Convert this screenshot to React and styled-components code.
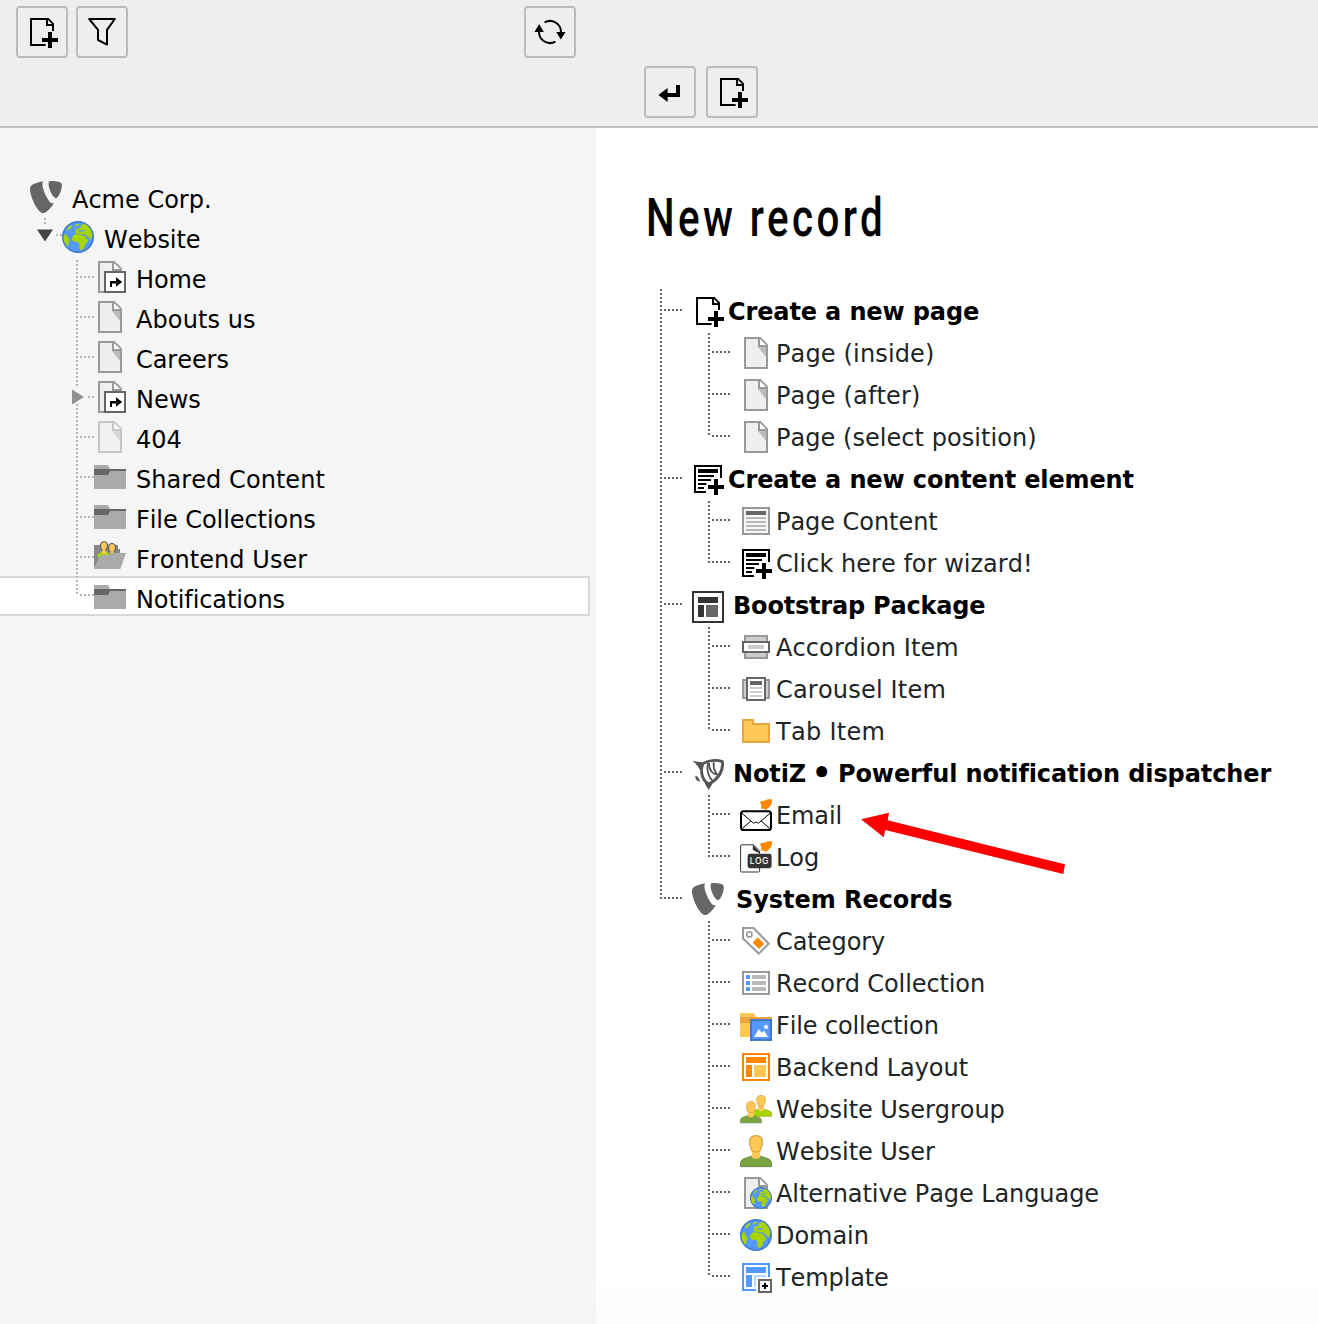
import React from 'react';
import styled, { createGlobalStyle, css } from 'styled-components';

const GlobalStyle = createGlobalStyle`
  * { box-sizing: border-box; }
  body {
    margin: 0;
    background: #fff;
    font-family: Verdana, "DejaVu Sans", sans-serif;
    font-size: 24px;
    font-kerning: none;
    font-variant-ligatures: none;
    color: #000;
  }
  ul { list-style: none; margin: 0; padding: 0; }
`;

/* ---------- icons ---------- */

const Svg = styled.svg`
  display: block;
  flex: none;
  width: 32px;
  height: 32px;
  overflow: visible;
`;

const Plus = () => <path d="M11 8h2v3h3v2h-3v3h-2v-3H8v-2h3z" />;

const PageNew = () => (
  <>
    <path d="M2 1h9.3L14 3.7v3.8h-1V5h-3V2H3v12h6.8v1H2zM11 2v2h2z" fillRule="evenodd" />
    <Plus />
  </>
);

const Filter = () => (
  <path d="M1.6 1.5h12.8L10.5 6.9v7.4L6 12V6.9z" fill="none" stroke="#000" strokeLinejoin="round" />
);

const Refresh = () => (
  <>
    <path d="M5.3 3.2A5.5 5.5 0 0 1 13.5 8M10.7 12.8A5.5 5.5 0 0 1 2.5 8" fill="none" stroke="#000" />
    <path d="M11.1 8h4.7l-2.4 3.8zM.2 8h4.7L2.6 4z" />
  </>
);

const Return = () => <path d="M11 4.5h2v6H6.8V13L2.2 9.5 6.8 6v2.5H11z" />;

const Typo3 = () => (
  <g fill="#666" transform="scale(1.13) translate(-.5 -.5)">
    <path d="M11.1 10.3c-.2.1-.4.1-.6.1-1.8 0-4.5-6.3-4.5-8.4 0-.8.2-1 .5-1.3C4.3.9 1.6 1.8.8 2.8c-.2.3-.3.7-.3 1.2C.5 7.3 3.9 14.7 6.4 14.7c1.1 0 3-1.9 4.7-4.4" />
    <path d="M10 .5c2.3 0 4.6.4 4.6 1.7 0 2.7-1.7 5.9-2.5 5.9-1.5 0-3.4-4.3-3.4-6.4C8.7.7 9.1.5 10 .5" />
  </g>
);

const Globe = () => (
  <>
    <circle cx="8" cy="8" r="7.6" fill="#59f" stroke="#4077c9" strokeWidth=".8" />
    <path
      fill="#a8d400"
      d="M2.7 3.4 4.5 2l.6.4-.7 1.2-1 .9-.9.3zM.9 7.2l.7-.6 1 .5.2 1 1.1 1.3-.5 1.2-.3 1.7-.6.6-1.2-2L.8 9zM6.6 2 7.7 1.4l1.2.3-1 .7-1.3.3zM6.8 4.6l.8-.9 1.6-.3.4-1.2L11 1.3l1.7 1 1.7 2 .8 2.5-.3 1.6-.9.9-.8-1.3-.7-.4-.9-.9-1.9-.1-1.3-.4-1.5.2zM5 8.4l1-1.500 1.500-.4 1.600.2.900.600 1.600.200.700 1.500 1 .3-.5 1.100-1.200 1.100-.2 1.400-1.100 1.400-.9.3-.700-1.100v-2.100l-.9-1-1.600.1-1.100-.9z"
    />
    <path fill="#59f" d="m8.2 4.600 2.500-.1.9.4-.6.400-2.500-.1z" />
  </>
);

const Page = () => (
  <>
    <path fill="#999" d="M2 0h8.3L14 3.7V16H2z" />
    <path fill="#efefef" d="M3 1h6v4h4v10H3z" />
    <path fill="#fff" d="M10 1v3h3z" />
    <path fill="#bbb" d="M9 5h4v5z" />
  </>
);

const Shortcut = () => (
  <>
    <Page />
    <path fill="#666" d="M5 5h11v11H5z" />
    <path fill="#fff" d="M6 6h9v9H6z" />
    <path d="M8 10h3V8.1l3.1 2.4-3.1 2.4V11.2H9V13H8z" />
  </>
);

const Folder = () => (
  <>
    <path fill="#aaa" d="M0 2h7l1 2h8v10H0z" />
    <path fill="#666" d="M0 4h16v1H8L7 7H0z" />
  </>
);

const FolderUser = () => (
  <>
    <path fill="#888" d="M0 2h12v2h1v4H3L0 14z" />
    <path fill="#a8d400" d="M1.8 8.5V6.6L4 5.200h2L8 6.600v1z" />
    <path fill="#ffc857" d="M4.200 3.500h1.600v3H4.200zM8.200 4.300h1.600V7H8.200z" />
    <ellipse cx="5" cy="2.500" rx="1.800" ry="2.200" fill="#ffc857" stroke="#666" strokeWidth=".7" />
    <ellipse cx="9" cy="3.400" rx="1.800" ry="2.200" fill="#ffc857" stroke="#666" strokeWidth=".7" />
    <path fill="#ffc857" d="M4.300 4h1.400v1.600H4.300zM8.300 5h1.400v1.400H8.300z" />
    <path fill="#aaa" d="M3.2 7h4.3l1-1H16l-2.800 8H0z" />
  </>
);

const ContentNew = () => (
  <>
    <path d="M1 1h14v6.5h-1V2H2v12h5v1H1z" />
    <path d="M3 3h10v2H3zM3 6h8v1H3zM3 8h6.5v1H3zM3 10h4.2v1H3zM3 12h3v1H3z" />
    <Plus />
  </>
);

const Content = () => (
  <>
    <path fill="#999" d="M1 1h14v14H1z" />
    <path fill="#f7f7f7" d="M2 2h12v12H2z" />
    <path fill="#666" d="M3 3h10v2H3z" />
    <path fill="#b9b9b9" d="M3 6h10v1H3zM3 8h10v1H3zM3 10h10v1H3zM3 12h10v1H3z" />
  </>
);

const Package = () => (
  <>
    <path fill="#333" d="M0 0h16v16H0z" />
    <path fill="#fff" d="M1 1h14v14H1z" />
    <path fill="#333" d="M3 3h10v3H3zM3 7h3v6H3z" />
    <path fill="#666" d="M7 7h6v6H7z" />
  </>
);

const Accordion = () => (
  <>
    <path fill="#ccc" stroke="#999" d="M2.5 2.5h11v11h-11z" />
    <path fill="#fff" stroke="#666" d="M1.5 5.5h13v5h-13z" />
    <path fill="#ccc" d="M4 7h8v2H4z" />
  </>
);

const Carousel = () => (
  <>
    <path fill="#ccc" stroke="#999" d="M1.5 3.5h13v9h-13z" />
    <path fill="#fff" stroke="#666" d="M3.5 2.5h9v11h-9z" />
    <path fill="#666" d="M5 4h6v2H5z" />
    <path fill="#ccc" d="M5 7h6v1H5zM5 9h6v1H5zM5 11h6v1H5z" />
  </>
);

const Tab = () => <path fill="#ffc857" stroke="#e8a33d" d="M1.5 2.5h5v2h8v9h-13z" />;

const NotiZ = () => (
  <g fill="none" stroke="#555">
    <path fill="#555" stroke="none" d="M.2.9C2.5 1.500 4.800 1.700 6.200 1.500L5.200 5 3.800 5.200C3 3.500 1.800 2.200.2.900zM1.700 8.300C2.600 8.500 3.700 9.800 4 11.200 2.800 11.500 1.400 10 1.700 8.300zM6.300 12l4.200-.8C9.900 13.300 9 14.200 8.300 15.500 7.700 14.200 7 13.500 6.300 12z" />
    <path strokeWidth="1.4" d="M5.300 2.400C8 .8 12 .2 15.200 1.300 15.700 6 13 10 8.600 12.500 5.500 11.300 3.900 7 5.300 2.400z" />
    <path strokeWidth=".9" d="M8 1.800C7.200 5 8 9 10.400 11" />
    <path strokeWidth=".9" d="M10.900 1.600C10.500 3.800 11.200 6 12.500 7.600C10.500 8 8.400 5.500 8.500 2" />
  </g>
);

const Bell = () => (
  <path fill="#ff8700" d="M10 1.200 12 .9C13.300 0 14.800-.1 16 .3c.1 1.800-.4 3.100-1.700 3.900L13 5.500l-.9-.6-1.600-.1.200-1.600z" />
);

const Email = () => (
  <>
    <rect x=".5" y="6.1" width="15" height="9.4" rx="1.3" fill="#fff" stroke="#000" />
    <path fill="none" stroke="#000" strokeWidth=".5" d="m1 7.200 5.800 4.900 1.200-.6 1.200.6L15 7.200M1.100 14.800l4.400-3.900M14.900 14.800l-4.400-3.900" />
    <Bell />
  </>
);

const LogLabel = styled.text`
  font: 500 4.3px Inter, sans-serif;
  fill: #fff;
  letter-spacing: 0.25px;
`;

const Log = () => (
  <>
    <path fill="#fff" stroke="#333" strokeWidth=".5" d="M.9 1.900h5.900l3 3.200v9.800q0 .6-.6.6H.9q-.6 0-.6-.6V2.500q0-.6.6-.6z" />
    <path fill="#333" d="M6.400 1.900 9.900 5.500v.7L6.400 4.500z" />
    <rect x="3.800" y="6.400" width="12" height="7.200" rx="1.200" fill="#333" />
    <LogLabel x="4.900" y="11.700">LOG</LogLabel>
    <Bell />
  </>
);

const Category = () => (
  <>
    <path fill="#fff" stroke="#999" d="M1.5 1.5h5.300l7.600 7.900-5 4.900-7.900-7.500z" />
    <circle cx="4.700" cy="4.700" r="1.300" fill="#fff" stroke="#999" strokeWidth=".8" />
    <path fill="#ff8700" d="m8.900 6.200 3.200 3.200-2.600 2.600-3.200-3.200z" />
  </>
);

const RecordCollection = () => (
  <>
    <path fill="#fff" stroke="#999" d="M1.5 2.5h13v11h-13z" />
    <path fill="#59f" d="M3 4h2v2H3zM3 7h2v2H3zM3 10h2v2H3z" />
    <path fill="#b9b9b9" d="M6 4h7v2H6zM6 7h7v2H6zM6 10h7v2H6z" />
  </>
);

const FileCollection = () => (
  <>
    <path fill="#ffc857" d="M0 2h7l1 2h8v10H0z" />
    <path fill="#e8a33d" d="M0 4h16v1l-1 2H0z" />
    <path fill="#59f" stroke="#4077c9" d="M5.5 5.500h10v10h-10z" />
    <path fill="#fff" d="m7 14 2.400-4 1.500 2 1.100-1.300L14 14z" />
    <circle cx="13" cy="9" r="1" fill="#fff" />
  </>
);

const BackendLayout = () => (
  <>
    <path fill="#fff" stroke="#ff8700" d="M1.5 1.5h13v13h-13z" />
    <path fill="#ff8700" d="M3 3h10v3H3zM3 7h3v6H3z" />
    <path fill="#ffc857" d="M7 7h6v6H7z" />
  </>
);

const User = ({ color = '#7aa341', edge = '#638a35' }) => (
  <>
    <path fill={color} stroke={edge} strokeWidth=".5" d="M.3 15.800v-1.500c0-1.700 1-2.200 2.500-2.700l3-1h4.400l3 1c1.500.5 2.500 1 2.500 2.700v1.500z" />
    <path fill="#ffc857" d="M5.900 7h4.200v4.300q-2.100 1.300-4.200 0z" />
    <path fill="#ffc857" stroke="#d9a441" strokeWidth=".6" d="M8 .3c2 0 3.200 1.100 3.200 3.100 0 1.600-.3 3-.9 4C9.700 8.300 8.900 8.500 8 8.500s-1.700-.2-2.300-1.100c-.6-1-.9-2.400-.9-4C4.800 1.400 6 .3 8 .3z" />
  </>
);

const UserGroup = () => (
  <>
    <g transform="translate(5.100 1) scale(.68 .67)">
      <User color="#a8d400" edge="#86aa00" />
    </g>
    <g transform="translate(0 4) scale(.68 .69)">
      <User />
    </g>
  </>
);

const PageLanguage = () => (
  <>
    <Page />
    <g transform="translate(5 5) scale(.6875)">
      <Globe />
    </g>
  </>
);

const Template = () => (
  <>
    <path fill="#fff" stroke="#59f" d="M1.5 1.5h13v13h-13z" />
    <path fill="#59f" d="M3 3h10v3H3zM3 7h3v6H3z" />
    <path fill="#bcd7ff" d="M7 7h6v6H7z" />
    <path fill="#fff" d="M8 8h8v8H8z" />
    <path fill="#fff" stroke="#666" d="M9.500 9.500h6v6h-6z" />
    <path d="M12 11h1v1h1v1h-1v1h-1v-1h-1v-1h1z" />
  </>
);

const icons = {
  PageNew, Filter, Refresh, Return, Typo3, Globe, Page, Shortcut, Folder, FolderUser, ContentNew,
  Content, Package, Accordion, Carousel, Tab, NotiZ, Email, Log, Category, RecordCollection,
  FileCollection, BackendLayout, UserGroup, User, PageLanguage, Template,
};

function Icon({ name, className }) {
  const Glyph = icons[name];
  return (
    <Svg viewBox="0 0 16 16" className={className} aria-hidden="true">
      <Glyph />
    </Svg>
  );
}

/* ---------- frame ---------- */

const Shell = styled.div`
  display: grid;
  grid-template-columns: 596px 1fr;
  grid-template-rows: 128px 1fr;
  width: 1318px;
  height: 1324px;
  overflow: hidden;
`;

const Header = styled.header`
  display: flex;
  align-items: flex-start;
  gap: ${(p) => p.$gap}px;
  padding: ${(p) => p.$padding};
  background: #eee;
  border-bottom: 2px solid #c2c2c2;
`;

const ToolButton = styled.button`
  display: grid;
  place-items: center;
  width: 52px;
  height: 52px;
  padding: 0;
  background: #eee;
  border: 2px solid #bbb;
  border-radius: 4px;
  ${(p) => p.$end && css`margin-left: auto;`}
`;

/* ---------- page tree ---------- */

const Sidebar = styled.nav`
  padding-top: 48px;
  background: #f5f5f5;
`;

const PageRow = styled.li`
  display: flex;
  height: 40px;
  width: 592px;
  margin-left: -2px;
  padding-left: ${(p) => p.$indent + 2}px;
  ${(p) => p.$selected && css`
    background: #fff;
    box-shadow: inset 0 0 0 2px #d7d7d7;
  `}
`;

const TreeIcon = styled(Icon)`
  margin-top: 5px;
  opacity: ${(p) => (p.$faded ? 0.5 : 1)};
`;

const PageLabel = styled.span`
  margin-left: 10px;
  line-height: 48px;
  white-space: nowrap;
  letter-spacing: ${(p) => p.$spacing || 0}px;
`;

const dotsDown = (c) => `repeating-linear-gradient(to bottom, ${c} 0 2px, transparent 2px 4px)`;
const dotsAcross = (c) => `repeating-linear-gradient(to right, ${c} 0 2px, transparent 2px 4px)`;

const verticals = {
  first: '0 4px / 2px 36px',
  middle: '0 0 / 2px 40px',
  last: '0 0 / 2px 20px',
};

const Branch = styled.span`
  flex: none;
  width: 18px;
  background:
    ${dotsDown('#b4b4b4')} ${(p) => verticals[p.$place]} no-repeat,
    ${dotsAcross('#b4b4b4')} 4px ${(p) => (p.$place === 'last' ? 18 : 20)}px / 14px 2px no-repeat;
`;

const ClosedBranch = styled.span`
  flex: none;
  width: 18px;
  background:
    ${dotsDown('#b4b4b4')} 0 0 / 2px 10px no-repeat,
    ${dotsDown('#b4b4b4')} 0 28px / 2px 12px no-repeat,
    ${dotsAcross('#b4b4b4')} 12px 20px / 6px 2px no-repeat;
`;

const ClosedArrow = styled.svg`
  display: block;
  width: 12px;
  height: 16px;
  margin: 13px 0 0 -4px;
`;

const OpenBranch = styled.span`
  flex: none;
  width: 26px;
  background:
    ${dotsDown('#b4b4b4')} 8px 2px / 2px 6px no-repeat,
    ${dotsAcross('#b4b4b4')} 20px 18px / 6px 2px no-repeat;
`;

const OpenArrow = styled.svg`
  display: block;
  width: 16px;
  height: 13px;
  margin: 13px 0 0 1px;
`;

const pages = [
  ['Home', 'Shortcut', -0.1],
  ['Abouts us', 'Page', 0.1],
  ['Careers', 'Page', -0.05],
  ['News', 'Shortcut'],
  ['404', 'Page'],
  ['Shared Content', 'Folder', 0.06],
  ['File Collections', 'Folder', -0.06],
  ['Frontend User', 'FolderUser', 0.05],
  ['Notifications', 'Folder', -0.1],
];

function PageTree() {
  return (
    <Sidebar>
      <ul>
        <PageRow $indent={30}>
          <TreeIcon name="Typo3" />
          <PageLabel>Acme Corp.</PageLabel>
        </PageRow>
        <PageRow $indent={36}>
          <OpenBranch>
            <OpenArrow viewBox="0 0 16 13"><path fill="#444" d="M0 .5h16L8 12.500z" /></OpenArrow>
          </OpenBranch>
          <TreeIcon name="Globe" />
          <PageLabel $spacing={-0.1}>Website</PageLabel>
        </PageRow>
        {pages.map(([label, icon, spacing], i) => (
          <PageRow key={label} $indent={76} $selected={label === 'Notifications'}>
            {label === 'News' ? (
              <ClosedBranch>
                <ClosedArrow viewBox="0 0 12 16"><path fill="#909090" d="M0 .5v15L12 8z" /></ClosedArrow>
              </ClosedBranch>
            ) : (
              <Branch $place={i === 0 ? 'first' : i === pages.length - 1 ? 'last' : 'middle'} />
            )}
            <TreeIcon name={icon} $faded={label === '404'} />
            <PageLabel $spacing={spacing}>{label}</PageLabel>
          </PageRow>
        ))}
      </ul>
    </Sidebar>
  );
}

/* ---------- record list ---------- */

const Main = styled.main`
  position: relative;
  padding: 54px 0 0 50px;
  background: linear-gradient(#fff 1150px, #fcfcfc 1196px);
`;

const Title = styled.h1`
  width: max-content;
  height: 72px;
  margin: 0;
  font: 500 53px/72px Roboto, sans-serif;
  letter-spacing: 4.5px;
  transform: scaleX(0.76);
  transform-origin: 0 0;
`;

const Groups = styled.ul`
  margin: 35px 0 0 14px;
  padding-top: 1px;
  background: ${dotsDown('#666')} 0 0 / 2px 610px no-repeat;
`;

const Group = styled.li`
  padding-left: 32px;
  background: ${dotsAcross('#666')} 4px 19px / 18px 2px no-repeat;
`;

const GroupHead = styled.div`
  display: flex;
  align-items: center;
  height: 42px;
`;

const GroupIcon = styled(Icon)`
  transform: translateY(${(p) => p.$drop || 0}px);
`;

const GroupLabel = styled.strong`
  margin-left: ${(p) => p.$gap}px;
  padding-top: 2px;
  font-weight: 700;
  line-height: 40px;
  white-space: nowrap;
  letter-spacing: ${(p) => p.$spacing || 0}px;
`;

const Bullet = styled.span`
  display: inline-block;
  transform: scale(1.3);
`;

const Records = styled.ul`
  margin-left: 16px;
  background: ${dotsDown('#666')} 0 1px / 2px calc(100% - 22px) no-repeat;
`;

const Record = styled.li`
  display: flex;
  align-items: center;
  gap: 4px;
  height: 42px;
  padding-left: 32px;
  color: #212424;
  white-space: nowrap;
  background: ${dotsAcross('#666')} 4px 19px / 18px 2px no-repeat;
`;

const RecordLabel = styled.span`
  padding-top: 2px;
  line-height: 40px;
  letter-spacing: ${(p) => p.$spacing || 0}px;
`;

const Pointer = styled.svg`
  position: absolute;
  left: 264px;
  top: 682px;
  width: 208px;
  height: 66px;
`;

const groups = [
  { id: 'page', label: 'Create a new page', icon: 'PageNew', gap: 4, spacing: -0.13, records: [
    ['Page (inside)', 'Page', 0.15], ['Page (after)', 'Page', 0.15], ['Page (select position)', 'Page', 0.05],
  ] },
  { id: 'content', label: 'Create a new content element', icon: 'ContentNew', gap: 4, spacing: -0.13, records: [
    ['Page Content', 'Content', -0.05], ['Click here for wizard!', 'ContentNew', 0.03],
  ] },
  { id: 'bootstrap', label: 'Bootstrap Package', icon: 'Package', gap: 9, drop: 2, spacing: -0.2, records: [
    ['Accordion Item', 'Accordion', 0.1], ['Carousel Item', 'Carousel', 0.2], ['Tab Item', 'Tab', 0.3],
  ] },
  { id: 'notiz', label: <>NotiZ <Bullet>•</Bullet> Powerful notification dispatcher</>, icon: 'NotiZ', gap: 9, drop: 2, spacing: -0.1, records: [
    ['Email', 'Email', -0.1], ['Log', 'Log'],
  ] },
  { id: 'system', label: 'System Records', icon: 'Typo3', gap: 12, spacing: -0.05, records: [
    ['Category', 'Category', -0.05], ['Record Collection', 'RecordCollection', -0.1],
    ['File collection', 'FileCollection', -0.13], ['Backend Layout', 'BackendLayout', -0.05],
    ['Website Usergroup', 'UserGroup', -0.05], ['Website User', 'User', -0.05],
    ['Alternative Page Language', 'PageLanguage', -0.08], ['Domain', 'Globe', -0.05], ['Template', 'Template', -0.1],
  ] },
];

export default function App() {
  return (
    <>
      <GlobalStyle />
      <Shell>
        <Header $gap={8} $padding="6px 20px 0 16px">
          <ToolButton aria-label="New page"><Icon name="PageNew" /></ToolButton>
          <ToolButton aria-label="Filter"><Icon name="Filter" /></ToolButton>
          <ToolButton $end aria-label="Refresh"><Icon name="Refresh" /></ToolButton>
        </Header>
        <Header $gap={10} $padding="66px 0 0 48px">
          <ToolButton aria-label="Back"><Icon name="Return" /></ToolButton>
          <ToolButton aria-label="New page"><Icon name="PageNew" /></ToolButton>
        </Header>
        <PageTree />
        <Main>
          <Title>New record</Title>
          <Groups>
            {groups.map((g) => (
              <Group key={g.id}>
                <GroupHead>
                  <GroupIcon name={g.icon} $drop={g.drop} />
                  <GroupLabel $gap={g.gap} $spacing={g.spacing}>{g.label}</GroupLabel>
                </GroupHead>
                <Records>
                  {g.records.map(([label, icon, spacing]) => (
                    <Record key={label}>
                      <Icon name={icon} />
                      <RecordLabel $spacing={spacing}>{label}</RecordLabel>
                    </Record>
                  ))}
                </Records>
              </Group>
            ))}
          </Groups>
          <Pointer viewBox="860 810 208 66">
            <path fill="#f00" d="M861 819.300 889 812.700 887.700 820.300 1065 864.300 1063.300 874 885.300 830 883.700 837.300z" />
          </Pointer>
        </Main>
      </Shell>
    </>
  );
}
